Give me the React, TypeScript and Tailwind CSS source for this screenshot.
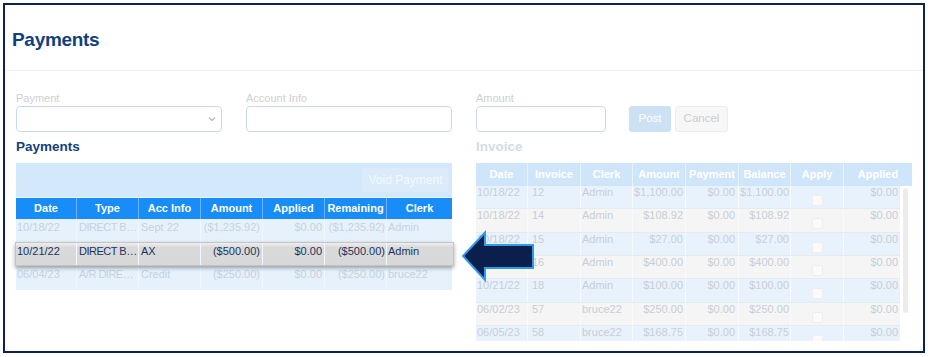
import React from 'react';

const FONT = "font-['Liberation_Sans',Arial,sans-serif]";

type PayRow = {
  date: string;
  type: string;
  acc: string;
  amount: string;
  applied: string;
  remaining: string;
  clerk: string;
  active?: boolean;
};

const payments: PayRow[] = [
  { date: '10/18/22', type: 'DIRECT B…', acc: 'Sept 22', amount: '($1,235.92)', applied: '$0.00', remaining: '($1,235.92)', clerk: 'Admin' },
  { date: '10/21/22', type: 'DIRECT B…', acc: 'AX', amount: '($500.00)', applied: '$0.00', remaining: '($500.00)', clerk: 'Admin', active: true },
  { date: '06/04/23', type: 'A/R DIRE…', acc: 'Credit', amount: '($250.00)', applied: '$0.00', remaining: '($250.00)', clerk: 'bruce22' },
];

const invoices = [
  ['10/18/22', '12', 'Admin', '$1,100.00', '$0.00', '$1,100.00', '$0.00'],
  ['10/18/22', '14', 'Admin', '$108.92', '$0.00', '$108.92', '$0.00'],
  ['10/18/22', '15', 'Admin', '$27.00', '$0.00', '$27.00', '$0.00'],
  ['10/18/22', '16', 'Admin', '$400.00', '$0.00', '$400.00', '$0.00'],
  ['10/21/22', '18', 'Admin', '$100.00', '$0.00', '$100.00', '$0.00'],
  ['06/02/23', '57', 'bruce22', '$250.00', '$0.00', '$250.00', '$0.00'],
  ['06/05/23', '58', 'bruce22', '$168.75', '$0.00', '$168.75', '$0.00'],
];

const payHeads = ['Date', 'Type', 'Acc Info', 'Amount', 'Applied', 'Remaining', 'Clerk'];
const invHeads = ['Date', 'Invoice', 'Clerk', 'Amount', 'Payment', 'Balance', 'Apply', 'Applied'];

const Field: React.FC<{ label: string; width: string; select?: boolean }> = ({ label, width, select }) => (
  <div className={`flex flex-col ${width}`}>
    <span className="text-[11px] leading-[13px] text-[#cfcfcf]">{label}</span>
    <div className="mt-[1px] h-[26px] rounded-[4px] border border-[#c9d9ea] bg-white flex items-center justify-end pr-[5px]">
      {select && (
        <svg width="8" height="6" viewBox="0 0 8 6">
          <polyline points="1,1.5 4,4.5 7,1.5" fill="none" stroke="#b5b5b5" strokeWidth="1.2" />
        </svg>
      )}
    </div>
  </div>
);

const PaymentsTable: React.FC = () => {
  const cell = 'h-full whitespace-nowrap overflow-hidden border-r border-[#f1f7fe] pt-[2px]';
  return (
    <div className="w-[436px] bg-[#e6f1fc]">
      <div className="h-[34px] bg-[#d3e8fb] flex items-center justify-end pr-[3px]">
        <div className="h-[24px] w-[87px] rounded-[3px] bg-[#dbebfa] text-[12px] text-[#f4f9fe] flex items-center justify-center">
          Void Payment
        </div>
      </div>
      <div className="h-[1px] bg-[#eaf4fe]" />
      <div className="grid grid-cols-[61px_62px_62px_62px_62px_62px_65px] h-[21px] bg-[#188cf7] text-white font-bold text-[11px]">
        {payHeads.map((h) => (
          <div key={h} className="flex items-center justify-center border-r border-[#6cb6fb] last:border-r-0">
            {h}
          </div>
        ))}
      </div>
      <div className="h-[71px]">
        {payments.map((r) => (
          <div
            key={r.date}
            className={
              r.active
                ? 'relative z-10 -ml-[1px] -mr-[2px] h-[24px] grid grid-cols-[61px_62px_62px_62px_62px_62px_65px] text-[11px] leading-[13px] text-[#1b345f] border border-[#c4c4c4] bg-gradient-to-b from-[#efefef] from-0% via-[#dadada] via-20% to-[#d8d8d8] shadow-[0_2px_4px_rgba(0,0,0,0.35)]'
                : 'h-[23px] grid grid-cols-[61px_62px_62px_62px_62px_62px_65px] text-[11px] leading-[13px] text-[#c6d1dd]'
            }
          >
            <div className={`${cell} pl-[1px]`}>{r.date}</div>
            <div className={`${cell} pl-[2px] tracking-[-0.5px]`}>{r.type}</div>
            <div className={`${cell} pl-[2px]`}>{r.acc}</div>
            <div className={`${cell} text-right pr-[2px]`}>{r.amount}</div>
            <div className={`${cell} text-right pr-[2px]`}>{r.applied}</div>
            <div className={`${cell} text-right pr-[1px]`}>{r.remaining}</div>
            <div className={`${cell} pl-[1px] border-r-0`}>{r.clerk}</div>
          </div>
        ))}
      </div>
    </div>
  );
};

const InvoiceTable: React.FC = () => {
  const cell = 'h-full whitespace-nowrap overflow-hidden border-r border-[#f7fafe]';
  return (
    <div className="w-[436px]">
      <div className="grid grid-cols-[52px_53px_52px_53px_53px_52px_53px_68px] h-[23px] bg-[#cfe5fa] text-white font-bold text-[11px]">
        {invHeads.map((h) => (
          <div key={h} className="flex items-center justify-center border-r border-[#e9f3fd] last:border-r-0">
            {h}
          </div>
        ))}
      </div>
      <div className="h-[155px] overflow-hidden flex">
        <div className="w-[424px]">
          {invoices.map((r, i) => (
            <div
              key={r[1]}
              className={`h-[23.33px] grid grid-cols-[52px_53px_52px_53px_53px_52px_53px_56px] text-[11px] leading-[13px] text-[#c8ced6] border-b border-[#e6ebf0] ${
                i % 2 === 0 ? 'bg-[#e8f2fd]' : 'bg-[#f5f5f5]'
              }`}
            >
              <div className={`${cell} pl-[1px]`}>{r[0]}</div>
              <div className={`${cell} pl-[4px]`}>{r[1]}</div>
              <div className={`${cell} pl-[1px]`}>{r[2]}</div>
              <div className={`${cell} text-right pr-[2px]`}>{r[3]}</div>
              <div className={`${cell} text-right pr-[3px]`}>{r[4]}</div>
              <div className={`${cell} text-right pr-[1px]`}>{r[5]}</div>
              <div className={`${cell} flex justify-center`}>
                <div className="mt-[9px] w-[11px] h-[11px] rounded-[2px] bg-[#fafafa] border border-[#eeeeee]" />
              </div>
              <div className={`${cell} text-right pr-[2px] border-r-0`}>{r[6]}</div>
            </div>
          ))}
        </div>
        <div className="w-[12px] bg-white pl-[3px] pt-[2px]">
          <div className="w-[5px] h-[125px] rounded-full bg-[#ececec]" />
        </div>
      </div>
    </div>
  );
};

const App: React.FC = () => {
  return (
    <div className={`relative w-[928px] h-[357px] bg-white p-[3px] ${FONT}`}>
      <div className="w-[922px] h-[350px] border-2 border-[#0c2250] overflow-hidden">
        <div className="h-[66px] border-b border-[#f2f2f2] pl-[7px] pt-[24px]">
          <h1 className="text-[19px] leading-[22px] font-bold text-[#123f7d] tracking-[-0.3px]">Payments</h1>
        </div>

        <div className="pl-[11px] pt-[21px] grid grid-cols-[436px_436px] gap-x-[24px]">
          <div className="flex flex-col">
            <div className="flex gap-[24px]">
              <Field label="Payment" width="w-[206px]" select />
              <Field label="Account Info" width="w-[206px]" />
            </div>
            <h2 className="mt-[7px] text-[13.5px] leading-[16px] font-bold text-[#143f7b]">Payments</h2>
            <div className="mt-[8px]">
              <PaymentsTable />
            </div>
          </div>

          <div className="flex flex-col">
            <div className="flex items-end">
              <Field label="Amount" width="w-[130px]" />
              <div className="ml-[23px] h-[26px] w-[42px] rounded-[3px] bg-[#cde1f5] text-white text-[11.5px] flex items-center justify-center">
                Post
              </div>
              <div className="ml-[4px] h-[26px] w-[53px] rounded-[3px] bg-[#f7f7f7] border border-[#ededed] text-[#cdcdcd] text-[11.5px] flex items-center justify-center">
                Cancel
              </div>
            </div>
            <h2 className="mt-[7px] text-[13.5px] leading-[16px] font-bold text-[#d3dce7]">Invoice</h2>
            <div className="mt-[8px]">
              <InvoiceTable />
            </div>
          </div>
        </div>
      </div>

      <svg className="absolute left-[461px] top-[230px]" width="76" height="53" viewBox="0 0 76 53">
        <polygon
          points="2,26 24,2.5 24,15 72,15 72,38 24,38 24,50"
          fill="#0b1f4d"
          stroke="#2c9ce9"
          strokeWidth="2"
          strokeLinejoin="miter"
        />
      </svg>
    </div>
  );
};

export default App;
